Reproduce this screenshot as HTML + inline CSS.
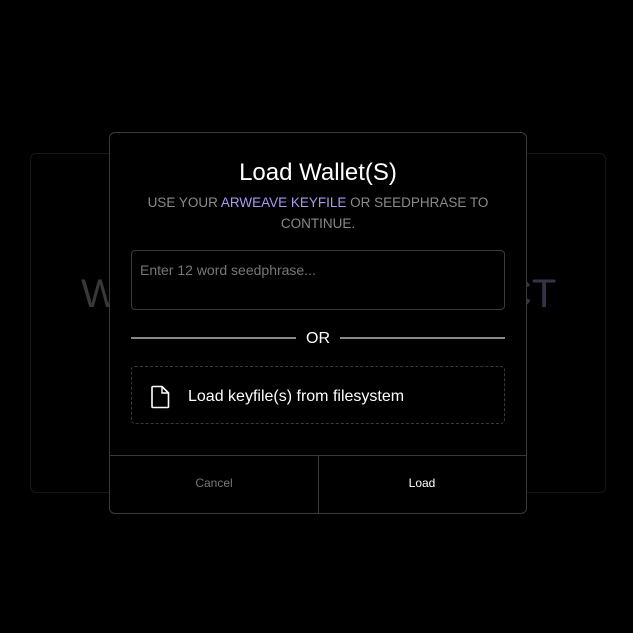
<!DOCTYPE html><html><head><style>
body{margin:0;width:633px;height:633px;background:#000;font-family:"Liberation Sans",sans-serif;position:relative;overflow:hidden}
.bg{position:absolute;left:30px;top:153px;width:574px;height:338px;border:1px solid #161616;border-radius:6px}
.big{position:absolute;top:272px;font-size:40px;color:#383838}
.m{position:absolute;left:109px;top:132px;width:416px;height:380px;border:1px solid #3a3a3a;border-radius:6px;background:#000}
.t{position:absolute;top:159px;left:109px;width:418px;text-align:center;color:#fff;font-size:24px}
.s{position:absolute;top:192px;left:140px;width:356px;text-align:center;color:#8a8a8a;font-size:13.5px;line-height:21px}
.s b{font-weight:normal;color:#a89af0}
.ta{position:absolute;left:131px;top:250px;border:1px solid #3a3a3a;border-radius:4px;color:#777;font-size:14px;box-sizing:border-box;width:374px;height:60px;padding:11px 8px}
.l{position:absolute;top:337px;height:2px;background:#888}
.or{position:absolute;top:330px;left:296px;width:44px;text-align:center;color:#fff;font-size:16px}
.d{position:absolute;left:131px;top:366px;width:374px;height:58px;box-sizing:border-box;border:1px dashed #3a3a3a;border-radius:4px}
.d span{position:absolute;left:56px;top:21px;color:#fff;font-size:16px}
.f{position:absolute;left:110px;top:455px;width:416px;height:1px;background:#3a3a3a}
.v{position:absolute;left:318px;top:456px;width:1px;height:57px;background:#3a3a3a}
.b{position:absolute;top:476px;font-size:12px;text-align:center;width:208px}
</style></head><body>
<div class="bg"></div>
<div class="big" style="left:81px">W</div>
<div class="big" style="left:503px;color:#33334a">CT</div>
<div class="m"></div>
<div class="t">Load Wallet(S)</div>
<div class="s">USE YOUR <b>ARWEAVE KEYFILE</b> OR SEEDPHRASE TO CONTINUE.</div>
<div class="ta">Enter 12 word seedphrase...</div>
<div class="l" style="left:131px;width:165px"></div>
<div class="l" style="left:340px;width:165px"></div>
<div class="or">OR</div>
<div class="d"><svg style="position:absolute;left:18px;top:18px" width="22" height="24" viewBox="0 0 22 24"><path d="M2 2.5Q2 1.5 3 1.5H12L18.5 8V21.5Q18.5 22.5 17.5 22.5H3Q2 22.5 2 21.5Z" fill="none" stroke="#fff" stroke-width="1.6" stroke-linejoin="round"/><path d="M12 1.5V8H18.5" fill="none" stroke="#fff" stroke-width="1.4"/></svg><span>Load keyfile(s) from filesystem</span></div>
<div class="f"></div><div class="v"></div>
<div class="b" style="left:110px;color:#777">Cancel</div>
<div class="b" style="left:318px;color:#fff">Load</div>
</body></html>
